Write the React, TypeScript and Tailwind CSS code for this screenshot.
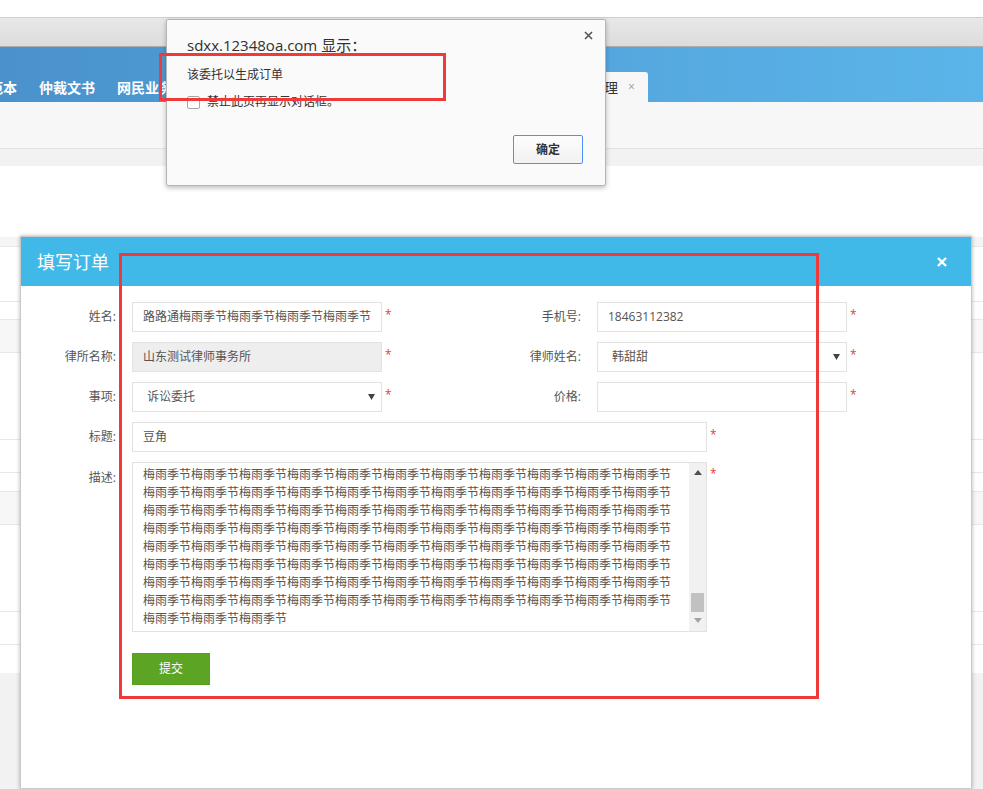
import React from "react";

const desc = [
  ...Array.from({ length: 8 }, () => "梅雨季节".repeat(11)),
  "梅雨季节".repeat(3),
];

const Star = () => (
  <span className="ml-[3px] -mt-[4px] text-[12px] text-[#e8413c]">*</span>
);

const Arrow = () => (
  <svg width="7" height="6" viewBox="0 0 7 6" className="shrink-0">
    <polygon points="0,0 7,0 3.5,6" fill="#444" />
  </svg>
);

const Label: React.FC<{ text: string; top?: boolean }> = ({ text, top }) => (
  <div className={`w-[95px] shrink-0 text-right text-[12px] text-[#555] ${top ? "self-start pt-[7px]" : ""}`}>
    {text}
  </div>
);

const Box: React.FC<{ children?: React.ReactNode; disabled?: boolean; wide?: boolean }> = ({ children, disabled, wide }) => (
  <div
    className={`ml-[16px] flex h-[30px] items-center border border-[#e2e2e2] px-[10px] text-[12px] text-[#555] ${
      wide ? "w-[575px]" : "w-[250px]"
    } ${disabled ? "bg-[#eeeeee]" : "bg-white"}`}
  >
    {children}
  </div>
);

const Select: React.FC<{ value: string }> = ({ value }) => (
  <div className="ml-[16px] flex h-[30px] w-[250px] items-center justify-between border border-[#e2e2e2] bg-white pl-[14px] pr-[6px] text-[12px] text-[#555]">
    <span>{value}</span>
    <Arrow />
  </div>
);

const App: React.FC = () => {
  return (
    <div className="relative h-[789px] w-full overflow-hidden bg-white font-['Open_Sans','Noto_Sans_CJK_SC',sans-serif]">
      {/* page behind */}
      <div className="h-[17px] bg-white" />
      <div className="h-[30px] border-y border-t-[#cfcfcf] border-b-[#adadad] bg-gradient-to-b from-[#e8e8e8] to-[#dcdcdc]" />
      <div className="flex h-[55px] items-end bg-gradient-to-r from-[#4a92cc] to-[#5bb5e9]">
        <div className="-ml-[39px] flex h-[30px] items-center gap-[22px] text-[14px] font-bold text-white">
          <span>合同范本</span>
          <span>仲裁文书</span>
          <span>网民业务</span>
        </div>
        <div className="ml-[377px] flex h-[30px] w-[98px] items-center rounded-tr-[3px] bg-[#f7f7f7] pl-[12px] text-[14px] text-[#333]">
          <span>订单管理</span>
          <span className="ml-[10px] text-[12px] text-[#999]">×</span>
        </div>
      </div>
      <div className="h-[47px] border-b border-[#e2e2e2] bg-[#f7f7f7]" />
      <div className="h-[17px] bg-[#f2f2f2]" />
      <div className="h-[71px] bg-white" />
      <div className="h-[10px] border-b border-[#e8e8e8] bg-[#f5f5f5]" />
      <div className="h-[55px] border-b border-[#e8e8e8]" />
      <div className="h-[18px] border-b border-[#e8e8e8]" />
      <div className="h-[33px] border-b border-[#e8e8e8] bg-[#f7f7f7]" />
      <div className="h-[87px] border-b border-[#e8e8e8]" />
      <div className="h-[33px] border-b border-[#e8e8e8]" />
      <div className="h-[19px] border-b border-[#e8e8e8]" />
      <div className="h-[33px] border-b border-[#e8e8e8] bg-[#f7f7f7]" />
      <div className="h-[87px] border-b border-[#e8e8e8]" />
      <div className="h-[33px] border-b border-[#e8e8e8]" />
      <div className="h-[28px]" />
      <div className="h-[200px] bg-[#f2f2f2]" />

      {/* modal */}
      <div className="absolute left-[20px] top-[236px] bottom-0 w-[952px] border border-[#c9c9c9] bg-white shadow-[0_0_4px_rgba(0,0,0,0.3)]">
        <div className="flex h-[49px] items-center justify-between bg-[#41b9e8] pl-[16px] pr-[24px]">
          <span className="mt-[1px] text-[18px] text-white">填写订单</span>
          <svg width="10" height="10" viewBox="0 0 10 10">
            <path d="M1 1L9 9M9 1L1 9" stroke="#fff" strokeWidth="2.4" />
          </svg>
        </div>
        <div className="flex flex-col gap-[10px] pt-[16px]">
          <div className="flex items-center">
            <div className="flex w-[465px] items-center">
              <Label text="姓名:" />
              <Box>路路通梅雨季节梅雨季节梅雨季节梅雨季节</Box>
              <Star />
            </div>
            <Label text="手机号:" />
            <Box>18463112382</Box>
            <Star />
          </div>
          <div className="flex items-center">
            <div className="flex w-[465px] items-center">
              <Label text="律所名称:" />
              <Box disabled>山东测试律师事务所</Box>
              <Star />
            </div>
            <Label text="律师姓名:" />
            <Select value="韩甜甜" />
            <Star />
          </div>
          <div className="flex items-center">
            <div className="flex w-[465px] items-center">
              <Label text="事项:" />
              <Select value="诉讼委托" />
              <Star />
            </div>
            <Label text="价格:" />
            <Box />
            <Star />
          </div>
          <div className="flex items-center">
            <Label text="标题:" />
            <Box wide>豆角</Box>
            <Star />
          </div>
          <div className="flex">
            <Label text="描述:" top />
            <div className="ml-[16px] flex h-[170px] w-[575px] border border-[#e2e2e2] bg-white">
              <div className="flex-1 overflow-hidden pl-[10px] pt-[3px] text-[12px] leading-[18px] text-[#555]">
                {desc.map((line, i) => (
                  <div key={i} className="whitespace-nowrap">
                    {line}
                  </div>
                ))}
              </div>
              <div className="flex w-[17px] flex-col items-center bg-[#f1f1f1]">
                <svg width="8" height="5" viewBox="0 0 8 5" className="mt-[7px]">
                  <polygon points="0,5 8,5 4,0" fill="#505050" />
                </svg>
                <div className="mt-[118px] h-[19px] w-[13px] bg-[#c1c1c1]" />
                <svg width="8" height="5" viewBox="0 0 8 5" className="mt-[6px]">
                  <polygon points="0,0 8,0 4,5" fill="#a3a3a3" />
                </svg>
              </div>
            </div>
            <span className="ml-[3px] mt-[3px] self-start text-[12px] text-[#e8413c]">*</span>
          </div>
          <div className="ml-[111px] mt-[11px]">
            <button className="h-[32px] w-[78px] border border-[#56a01f] bg-[#5ba424] text-[12px] text-white">
              提交
            </button>
          </div>
        </div>
      </div>

      {/* browser alert */}
      <div className="absolute left-[166px] top-[19px] flex h-[167px] w-[440px] flex-col rounded-[2px] border border-[#b5b5b5] bg-[#fafafa] pl-[20px] pr-[22px] shadow-[0_2px_5px_rgba(0,0,0,0.25)]">
        <div className="flex items-start justify-between pt-[14px]">
          <span className="text-[15px] leading-[22px] text-[#303030]">sdxx.12348oa.com 显示：</span>
          <svg width="9" height="9" viewBox="0 0 9 9" className="-mr-[10px] mt-[-3px]">
            <path d="M1 1L8 8M8 1L1 8" stroke="#555" strokeWidth="1.6" />
          </svg>
        </div>
        <div className="mt-[10px] text-[12px] leading-[18px] text-[#333]">该委托以生成订单</div>
        <div className="mt-[9px] flex items-center text-[12px] leading-[18px] text-[#333]">
          <span className="h-[13px] w-[13px] rounded-[2px] border border-[#a8a8a8] bg-white" />
          <span className="ml-[7px]">禁止此页再显示对话框。</span>
        </div>
        <div className="mt-auto mb-[21px] flex justify-end">
          <button className="h-[29px] w-[70px] rounded-[2px] border border-[#4d90fe] bg-gradient-to-b from-[#fdfdfd] to-[#f1f1f1] text-[12px] font-bold text-[#333]">
            确定
          </button>
        </div>
      </div>

      {/* annotations */}
      <div className="absolute left-[159px] top-[53px] h-[48px] w-[287px] border-[3px] border-[#f03a3a]" />
      <div className="absolute left-[119px] top-[253px] h-[446px] w-[700px] border-[3px] border-[#f03a3a]" />
    </div>
  );
};

export default App;
